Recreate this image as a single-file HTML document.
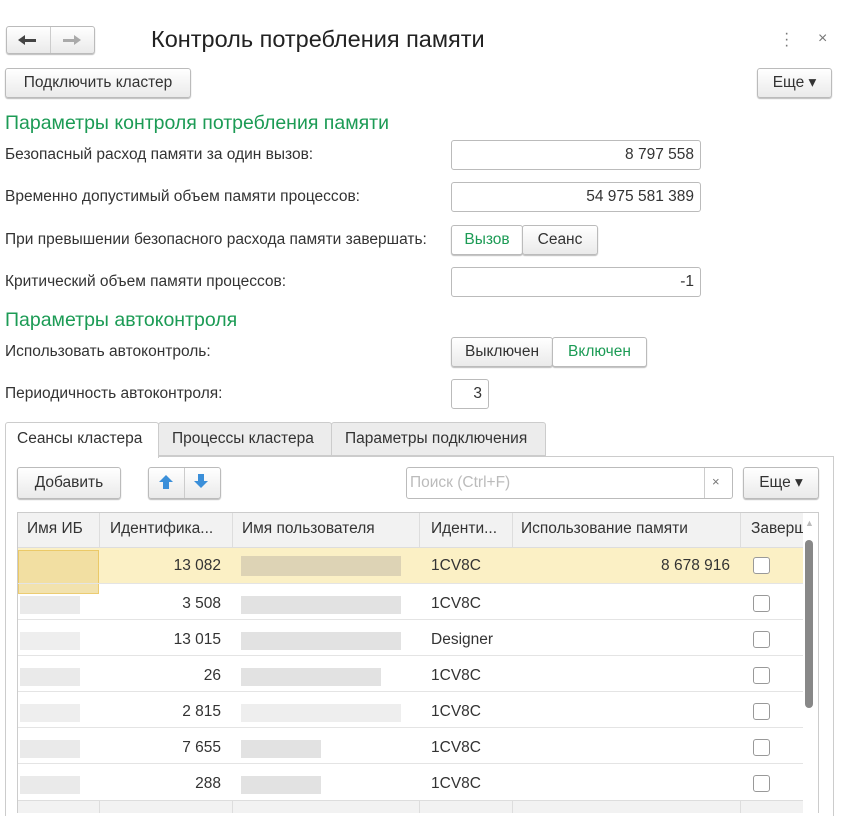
<!DOCTYPE html>
<html><head><meta charset="utf-8"><style>
*{box-sizing:border-box;margin:0;padding:0}
body{width:852px;height:813px;overflow:hidden;background:#fff;font-family:"Liberation Sans",Arial,sans-serif;font-size:15.5px;color:#333;position:relative}
.a{position:absolute}
.btn{position:absolute;border:1px solid #bbb;border-radius:3px;background:linear-gradient(#fff,#eaeaea);box-shadow:0 1px 1px #bbb;text-align:center;color:#333}
.inp{position:absolute;border:1px solid #bbb;border-radius:3px;background:#fff;text-align:right;padding-right:6px;line-height:28px}
.h{font-size:19.5px;color:#1c9b55}
.lbl{position:absolute;left:5px}
.cell{position:absolute;height:36px;line-height:36px;border-bottom:1px solid #e4e4e4}
.cb{position:absolute;left:753px;width:17px;height:17px;border:1px solid #999;border-radius:3px;background:#fff}
.blur{position:absolute;background:#e2e2e2}
</style></head><body>
<div class="btn" style="left:6px;top:26px;width:89px;height:28px"></div>
<div class="a" style="left:50px;top:27px;width:1px;height:26px;background:#ccc"></div>
<div class="a" style="left:24px;top:39px;width:12px;height:3px;background:#444"></div>
<div class="a" style="left:18px;top:35px;width:0;height:0;border:5.5px solid transparent;border-right:7px solid #444;border-left:0"></div>
<div class="a" style="left:63px;top:39px;width:11px;height:3px;background:#aaa"></div>
<div class="a" style="left:74px;top:35px;width:0;height:0;border:5.5px solid transparent;border-left:7px solid #aaa;border-right:0"></div>
<div class="a" style="left:151px;top:26px;font-size:23.5px;color:#222">Контроль потребления памяти</div>
<div class="a" style="left:784px;top:31px;color:#777;font-size:16px;line-height:6px">·<br>·<br>·</div>
<div class="a" style="left:818px;top:30px;color:#777;font-size:16px">×</div>

<div class="btn" style="left:5px;top:68px;width:186px;height:30px;line-height:28px">Подключить кластер</div>
<div class="btn" style="left:757px;top:68px;width:75px;height:30px;line-height:28px">Еще ▾</div>

<div class="a h" style="left:5px;top:112px">Параметры контроля потребления памяти</div>
<div class="lbl" style="top:146px">Безопасный расход памяти за один вызов:</div>
<div class="inp" style="left:451px;top:140px;width:250px;height:30px">8 797 558</div>
<div class="lbl" style="top:188px">Временно допустимый объем памяти процессов:</div>
<div class="inp" style="left:451px;top:182px;width:250px;height:30px">54 975 581 389</div>
<div class="lbl" style="top:231px">При превышении безопасного расхода памяти завершать:</div>
<div class="btn" style="left:451px;top:225px;width:72px;height:30px;line-height:28px;background:#fff;color:#1c9b55">Вызов</div>
<div class="btn" style="left:522px;top:225px;width:76px;height:30px;line-height:28px">Сеанс</div>
<div class="lbl" style="top:273px">Критический объем памяти процессов:</div>
<div class="inp" style="left:451px;top:267px;width:250px;height:30px">-1</div>

<div class="a h" style="left:5px;top:309px">Параметры автоконтроля</div>
<div class="lbl" style="top:343px">Использовать автоконтроль:</div>
<div class="btn" style="left:451px;top:337px;width:102px;height:30px;line-height:28px">Выключен</div>
<div class="btn" style="left:552px;top:337px;width:95px;height:30px;line-height:28px;background:#fff;color:#1c9b55">Включен</div>
<div class="lbl" style="top:385px">Периодичность автоконтроля:</div>
<div class="inp" style="left:451px;top:379px;width:38px;height:30px">3</div>

<div class="a" style="left:5px;top:456px;width:829px;height:360px;border:1px solid #ccc;border-bottom:0"></div>
<div class="a" style="left:5px;top:422px;width:154px;height:36px;border:1px solid #ccc;border-bottom:0;background:#fff;border-radius:3px 3px 0 0;padding:7px 0 0 11px">Сеансы кластера</div>
<div class="a" style="left:158px;top:422px;width:174px;height:34px;border:1px solid #ccc;background:#ececec;border-radius:3px 3px 0 0;padding:7px 0 0 13px">Процессы кластера</div>
<div class="a" style="left:331px;top:422px;width:215px;height:34px;border:1px solid #ccc;background:#ececec;border-radius:3px 3px 0 0;padding:7px 0 0 13px">Параметры подключения</div>

<div class="btn" style="left:17px;top:467px;width:104px;height:32px;line-height:30px">Добавить</div>
<div class="btn" style="left:148px;top:467px;width:73px;height:32px"></div>
<div class="a" style="left:184px;top:468px;width:1px;height:30px;background:#ccc"></div>
<div class="a" style="left:159px;top:475px;border:7px solid transparent;border-bottom:7px solid #3b8fd9;border-top:0"></div>
<div class="a" style="left:163px;top:482px;width:6px;height:7px;background:#3b8fd9"></div>
<div class="a" style="left:198px;top:474px;width:6px;height:7px;background:#3b8fd9"></div>
<div class="a" style="left:194px;top:481px;border:7px solid transparent;border-top:7px solid #3b8fd9;border-bottom:0"></div>
<div class="a" style="left:406px;top:467px;width:327px;height:32px;border:1px solid #bbb;border-radius:3px;background:#fff;color:#bbb;line-height:30px;padding-left:3px">Поиск (Ctrl+F)</div>
<div class="a" style="left:704px;top:468px;width:1px;height:30px;background:#ccc"></div>
<div class="a" style="left:712px;top:474px;color:#777;font-size:13px">×</div>
<div class="btn" style="left:743px;top:467px;width:76px;height:32px;line-height:30px">Еще ▾</div>

<div class="a" style="left:17px;top:512px;width:802px;height:301px;border:1px solid #ccc;border-bottom:0"></div>
<div class="a" style="left:18px;top:513px;width:785px;height:35px;background:#f2f2f2;border-bottom:1px solid #ddd"></div>
<div class="a" style="left:18px;top:548px;width:785px;height:36px;background:#fbf0c5"></div>
<div class="a" style="left:18px;top:550px;width:81px;height:44px;background:#f0dc9a;border:1px solid #e8c050;opacity:.8"></div>
<div class="a" style="left:18px;top:800px;width:785px;height:13px;background:#f2f2f2;border-top:1px solid #ddd"></div>
<div class="a" style="left:803px;top:513px;width:15px;height:300px;background:#fff"></div>
<div class="a" style="left:805px;top:540px;width:8px;height:168px;background:#888;border-radius:4px"></div>
<div class="a" style="left:805px;top:518px;color:#bbb;font-size:9px">▲</div>
<div class="a" style="left:27px;top:520px">Имя ИБ</div>
<div class="a" style="left:110px;top:520px">Идентифика...</div>
<div class="a" style="left:242px;top:520px">Имя пользователя</div>
<div class="a" style="left:431px;top:520px">Иденти...</div>
<div class="a" style="left:521px;top:520px">Использование памяти</div>
<div class="a" style="left:751px;top:520px;width:52px;overflow:hidden;white-space:nowrap">Завершить</div>
<div class="a" style="left:99px;top:513px;width:1px;height:35px;background:#ddd"></div>
<div class="a" style="left:232px;top:513px;width:1px;height:35px;background:#ddd"></div>
<div class="a" style="left:419px;top:513px;width:1px;height:35px;background:#ddd"></div>
<div class="a" style="left:512px;top:513px;width:1px;height:35px;background:#ddd"></div>
<div class="a" style="left:740px;top:513px;width:1px;height:35px;background:#ddd"></div>
<div class="cell" style="left:18px;top:548px;width:785px"></div>
<div class="cell" style="left:18px;top:584px;width:785px"></div>
<div class="cell" style="left:18px;top:620px;width:785px"></div>
<div class="cell" style="left:18px;top:656px;width:785px"></div>
<div class="cell" style="left:18px;top:692px;width:785px"></div>
<div class="cell" style="left:18px;top:728px;width:785px"></div>
<div class="blur" style="left:241px;top:556px;width:160px;height:20px;background:#ddd3b5"></div>
<div class="blur" style="left:241px;top:596px;width:160px;height:18px"></div>
<div class="blur" style="left:241px;top:632px;width:160px;height:18px"></div>
<div class="blur" style="left:241px;top:668px;width:140px;height:18px"></div>
<div class="blur" style="left:241px;top:704px;width:160px;height:18px;background:#eee"></div>
<div class="blur" style="left:241px;top:740px;width:80px;height:18px"></div>
<div class="blur" style="left:241px;top:776px;width:80px;height:18px"></div>
<div class="blur" style="left:20px;top:596px;width:60px;height:18px;background:#eaeaea"></div>
<div class="blur" style="left:20px;top:632px;width:60px;height:18px;background:#eee"></div>
<div class="blur" style="left:20px;top:668px;width:60px;height:18px;background:#eaeaea"></div>
<div class="blur" style="left:20px;top:704px;width:60px;height:18px;background:#eee"></div>
<div class="blur" style="left:20px;top:740px;width:60px;height:18px;background:#eaeaea"></div>
<div class="blur" style="left:20px;top:776px;width:60px;height:18px;background:#eaeaea"></div>
<div class="a" style="left:100px;top:557px;width:121px;text-align:right">13 082</div>
<div class="a" style="left:100px;top:595px;width:121px;text-align:right">3 508</div>
<div class="a" style="left:100px;top:631px;width:121px;text-align:right">13 015</div>
<div class="a" style="left:100px;top:667px;width:121px;text-align:right">26</div>
<div class="a" style="left:100px;top:703px;width:121px;text-align:right">2 815</div>
<div class="a" style="left:100px;top:739px;width:121px;text-align:right">7 655</div>
<div class="a" style="left:100px;top:775px;width:121px;text-align:right">288</div>
<div class="a" style="left:431px;top:557px">1CV8C</div>
<div class="a" style="left:431px;top:595px">1CV8C</div>
<div class="a" style="left:431px;top:631px">Designer</div>
<div class="a" style="left:431px;top:667px">1CV8C</div>
<div class="a" style="left:431px;top:703px">1CV8C</div>
<div class="a" style="left:431px;top:739px">1CV8C</div>
<div class="a" style="left:431px;top:775px">1CV8C</div>
<div class="a" style="left:520px;top:557px;width:210px;text-align:right">8 678 916</div>
<div class="cb" style="top:557px"></div>
<div class="cb" style="top:595px"></div>
<div class="cb" style="top:631px"></div>
<div class="cb" style="top:667px"></div>
<div class="cb" style="top:703px"></div>
<div class="cb" style="top:739px"></div>
<div class="cb" style="top:775px"></div>
<div class="a" style="left:99px;top:800px;width:1px;height:13px;background:#ddd"></div>
<div class="a" style="left:232px;top:800px;width:1px;height:13px;background:#ddd"></div>
<div class="a" style="left:419px;top:800px;width:1px;height:13px;background:#ddd"></div>
<div class="a" style="left:512px;top:800px;width:1px;height:13px;background:#ddd"></div>
<div class="a" style="left:740px;top:800px;width:1px;height:13px;background:#ddd"></div>
</body></html>
